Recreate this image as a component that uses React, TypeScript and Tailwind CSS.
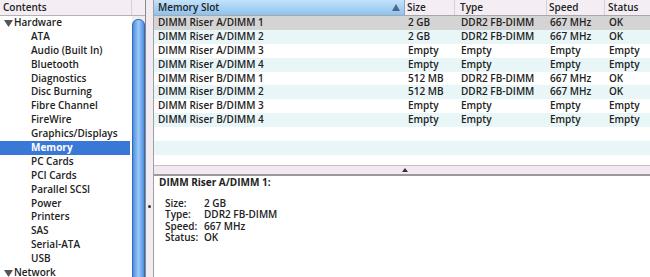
import React from "react";

const font = { fontFamily: '"Open Sans", "DejaVu Sans", sans-serif' };

const sidebar = [
  "ATA",
  "Audio (Built In)",
  "Bluetooth",
  "Diagnostics",
  "Disc Burning",
  "Fibre Channel",
  "FireWire",
  "Graphics/Displays",
  "Memory",
  "PC Cards",
  "PCI Cards",
  "Parallel SCSI",
  "Power",
  "Printers",
  "SAS",
  "Serial-ATA",
  "USB",
];

const rows = [
  ["DIMM Riser A/DIMM 1", "2 GB", "DDR2 FB-DIMM", "667 MHz", "OK"],
  ["DIMM Riser A/DIMM 2", "2 GB", "DDR2 FB-DIMM", "667 MHz", "OK"],
  ["DIMM Riser A/DIMM 3", "Empty", "Empty", "Empty", "Empty"],
  ["DIMM Riser A/DIMM 4", "Empty", "Empty", "Empty", "Empty"],
  ["DIMM Riser B/DIMM 1", "512 MB", "DDR2 FB-DIMM", "667 MHz", "OK"],
  ["DIMM Riser B/DIMM 2", "512 MB", "DDR2 FB-DIMM", "667 MHz", "OK"],
  ["DIMM Riser B/DIMM 3", "Empty", "Empty", "Empty", "Empty"],
  ["DIMM Riser B/DIMM 4", "Empty", "Empty", "Empty", "Empty"],
];

const details = [
  ["Size:", "2 GB"],
  ["Type:", "DDR2 FB-DIMM"],
  ["Speed:", "667 MHz"],
  ["Status:", "OK"],
];

const Triangle = () => (
  <svg width="9" height="8" viewBox="0 0 9 8" className="mr-[1px]">
    <path d="M0 1 L9 1 L4.5 8 Z" fill="#555" />
  </svg>
);

const App = () => {
  return (
    <div
      className="flex h-[277px] w-[650px] overflow-hidden bg-white text-[10px] font-semibold text-[#222]"
      style={font}
    >
      {/* Sidebar */}
      <div className="flex w-[145px] flex-col">
        <div className="flex h-[16px] border-b border-[#b8b0b8] bg-[#f4eef4]">
          <div className="w-[132px] border-r border-[#d8d0d8] pl-[3px] leading-[15px]">Contents</div>
          <div className="flex-1" />
        </div>
        <div className="flex flex-1">
          <div className="w-[132px]">
            <div className="flex h-[13.9px] items-center pl-[4px] leading-[13.9px]">
              <Triangle />
              Hardware
            </div>
            {sidebar.map((s) =>
              s === "Memory" ? (
                <div key={s} className="mr-[2px] h-[13.9px] bg-[#3a78d8] pl-[31px] font-bold leading-[13.9px] text-white">
                  {s}
                </div>
              ) : (
                <div key={s} className="h-[13.9px] pl-[31px] leading-[13.9px]">
                  {s}
                </div>
              )
            )}
            <div className="flex h-[13.9px] items-center pl-[4px] leading-[13.9px]">
              <Triangle />
              Network
            </div>
          </div>
          <div className="flex w-[13px] flex-col bg-[#eeeeee]">
            <div className="h-[3px]" />
            <div className="flex-1 rounded-t-[6px] border border-[#3668b8] bg-gradient-to-r from-[#4f8ee0] via-[#9ccaf6] to-[#4f8ee0]" />
          </div>
        </div>
      </div>

      {/* Vertical splitter */}
      <div className="flex w-[8px] flex-col items-center border-l border-[#8a8a8a] bg-[#f2ecf2]">
        <div className="mt-[205px] h-[3px] w-[3px] rounded-full bg-[#333]" />
      </div>

      {/* Main */}
      <div className="flex flex-1 flex-col border-l border-[#a0a0a0]">
        <div className="flex h-[16px] border-b border-[#a8a8a8] bg-[#f4eef4] leading-[15px]">
          <div className="flex w-[251px] justify-between border-r border-[#8aa8c8] bg-gradient-to-b from-[#c4e2fa] to-[#8cc2ee] pl-[4px] pr-[4px]">
            <span>Memory Slot</span>
            <svg width="8" height="7" viewBox="0 0 8 7" className="mt-[4px]">
              <path d="M0 7 L8 7 L4 0 Z" fill="#4a6a8a" />
            </svg>
          </div>
          <div className="w-[50px] border-r border-[#d8d0d8] pl-[2px]">Size</div>
          <div className="w-[92px] border-r border-[#d8d0d8] pl-[5px]">Type</div>
          <div className="w-[58px] border-r border-[#d8d0d8] pl-[2px]">Speed</div>
          <div className="flex-1 pl-[3px]">Status</div>
        </div>
        <div className="flex h-[149px] flex-col">
          {rows.map((r, i) => (
            <div
              key={r[0]}
              className={`flex h-[13.9px] shrink-0 leading-[13.9px] ${
                i === 0 ? "bg-[#d4d4d4]" : i % 2 === 1 ? "bg-[#e9f6f8]" : "bg-white"
              }`}
            >
              <div className="w-[251px] pl-[4px]">{r[0]}</div>
              <div className="w-[50px] pl-[3px]">{r[1]}</div>
              <div className="w-[92px] pl-[6px]">{r[2]}</div>
              <div className="w-[58px] pl-[3px]">{r[3]}</div>
              <div className="flex-1 pl-[4px]">{r[4]}</div>
            </div>
          ))}
          <div className="h-[13.9px] shrink-0 bg-white" />
          <div className="h-[13.9px] shrink-0 bg-[#e9f6f8]" />
        </div>

        {/* Horizontal splitter */}
        <div className="flex h-[11px] items-center border-t border-[#c4c4c4] border-b-2 border-b-[#9a9a9a] bg-[#f2e8f2] pl-[248px]">
          <svg width="6" height="4" viewBox="0 0 6 4">
            <path d="M0 4 L6 4 L3 0 Z" fill="#333" />
          </svg>
        </div>

        {/* Detail */}
        <div className="flex-1 pl-[5px]">
          <div className="font-bold leading-[12px]">DIMM Riser A/DIMM 1:</div>
          <div className="mt-[10px] flex flex-col pl-[6px]">
            {details.map(([k, v]) => (
              <div key={k} className="flex h-[11.3px] items-center">
                <span className="w-[39px] leading-[11px]">{k}</span>
                <span className="leading-[11px]">{v}</span>
              </div>
            ))}
          </div>
        </div>
      </div>
    </div>
  );
};

export default App;
